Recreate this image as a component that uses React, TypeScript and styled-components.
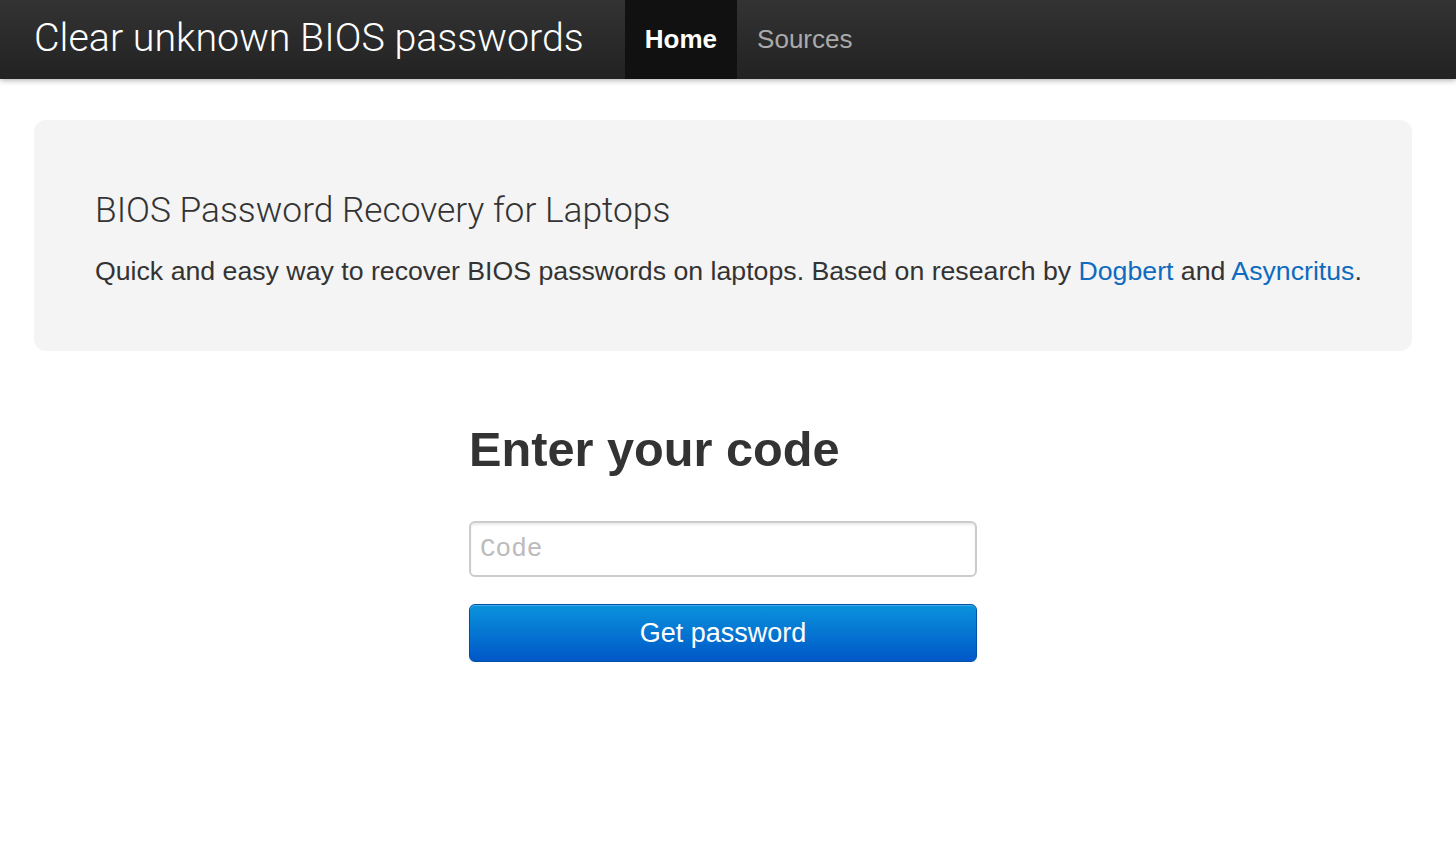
import React from 'react';
import styled, { createGlobalStyle } from 'styled-components';

const GlobalStyle = createGlobalStyle`
  html, body {
    margin: 0;
    padding: 0;
    background: #ffffff;
    font-family: "Liberation Sans", Arial, sans-serif;
    color: #333333;
  }
`;

const Navbar = styled.header`
  display: flex;
  align-items: stretch;
  height: 79px;
  background: linear-gradient(to bottom, #333333, #222222);
  box-shadow: 0 1px 6px rgba(0, 0, 0, 0.35);
  padding-left: 34px;
`;

const Brand = styled.a`
  display: flex;
  align-items: center;
  font-family: Roboto, "Liberation Sans", sans-serif;
  font-weight: 300;
  font-size: 39.4px;
  color: #ffffff;
  text-decoration: none;
  margin-right: 41px;
  padding-bottom: 4px;
`;

const NavItem = styled.a<{ $active?: boolean }>`
  display: flex;
  align-items: center;
  padding: 0 20px;
  font-size: 26px;
  font-weight: ${(p) => (p.$active ? 'bold' : 'normal')};
  color: ${(p) => (p.$active ? '#ffffff' : '#aaaaaa')};
  background: ${(p) => (p.$active ? '#111111' : 'transparent')};
  text-decoration: none;
`;

const Container = styled.main`
  padding: 41px 44px 0 34px;
`;

const Hero = styled.section`
  background: #f4f4f4;
  border-radius: 12px;
  padding: 68px 30px 58px 61px;
`;

const HeroTitle = styled.h1`
  margin: 0 0 17px 0;
  font-family: Roboto, "Liberation Sans", sans-serif;
  font-weight: 300;
  font-size: 35.3px;
  line-height: 44px;
  color: #333333;
`;

const HeroText = styled.p`
  margin: 0;
  font-size: 26.7px;
  line-height: 44px;
  color: #333333;
  white-space: nowrap;
`;

const Link = styled.a`
  color: #0e6bbf;
  text-decoration: none;
`;

const Form = styled.form`
  width: 508px;
  margin: 70px auto 0 auto;
  display: flex;
  flex-direction: column;
`;

const FormTitle = styled.h2`
  margin: 0 0 44px 0;
  font-size: 48.7px;
  line-height: 56px;
  font-weight: bold;
  color: #333333;
`;

const CodeInput = styled.input`
  box-sizing: border-box;
  height: 56px;
  width: 100%;
  padding: 0 9px;
  border: 2px solid #cccccc;
  border-radius: 6px;
  box-shadow: inset 0 2px 2px rgba(0, 0, 0, 0.08);
  font-family: "Liberation Mono", "Courier New", monospace;
  font-size: 26px;
  color: #555555;
  outline: none;
  &::placeholder {
    color: #bbbbbb;
  }
`;

const SubmitButton = styled.button`
  margin-top: 27px;
  height: 58px;
  width: 100%;
  border: 1px solid #0050a8;
  border-radius: 6px;
  background: linear-gradient(to bottom, #0a93dc, #0057c8);
  box-shadow: inset 0 1px 0 rgba(255, 255, 255, 0.25), 0 1px 2px rgba(0, 0, 0, 0.1);
  color: #ffffff;
  font-family: "Liberation Sans", Arial, sans-serif;
  font-size: 27px;
  cursor: pointer;
`;

export default function App() {
  return (
    <>
      <GlobalStyle />
      <Navbar>
        <Brand href="#">Clear unknown BIOS passwords</Brand>
        <NavItem href="#" $active>Home</NavItem>
        <NavItem href="#">Sources</NavItem>
      </Navbar>
      <Container>
        <Hero>
          <HeroTitle>BIOS Password Recovery for Laptops</HeroTitle>
          <HeroText>
            Quick and easy way to recover BIOS passwords on laptops. Based on research by{' '}
            <Link href="#">Dogbert</Link> and <Link href="#">Asyncritus</Link>.
          </HeroText>
        </Hero>
        <Form onSubmit={(e) => e.preventDefault()}>
          <FormTitle>Enter your code</FormTitle>
          <CodeInput type="text" placeholder="Code" />
          <SubmitButton type="submit">Get password</SubmitButton>
        </Form>
      </Container>
    </>
  );
}
